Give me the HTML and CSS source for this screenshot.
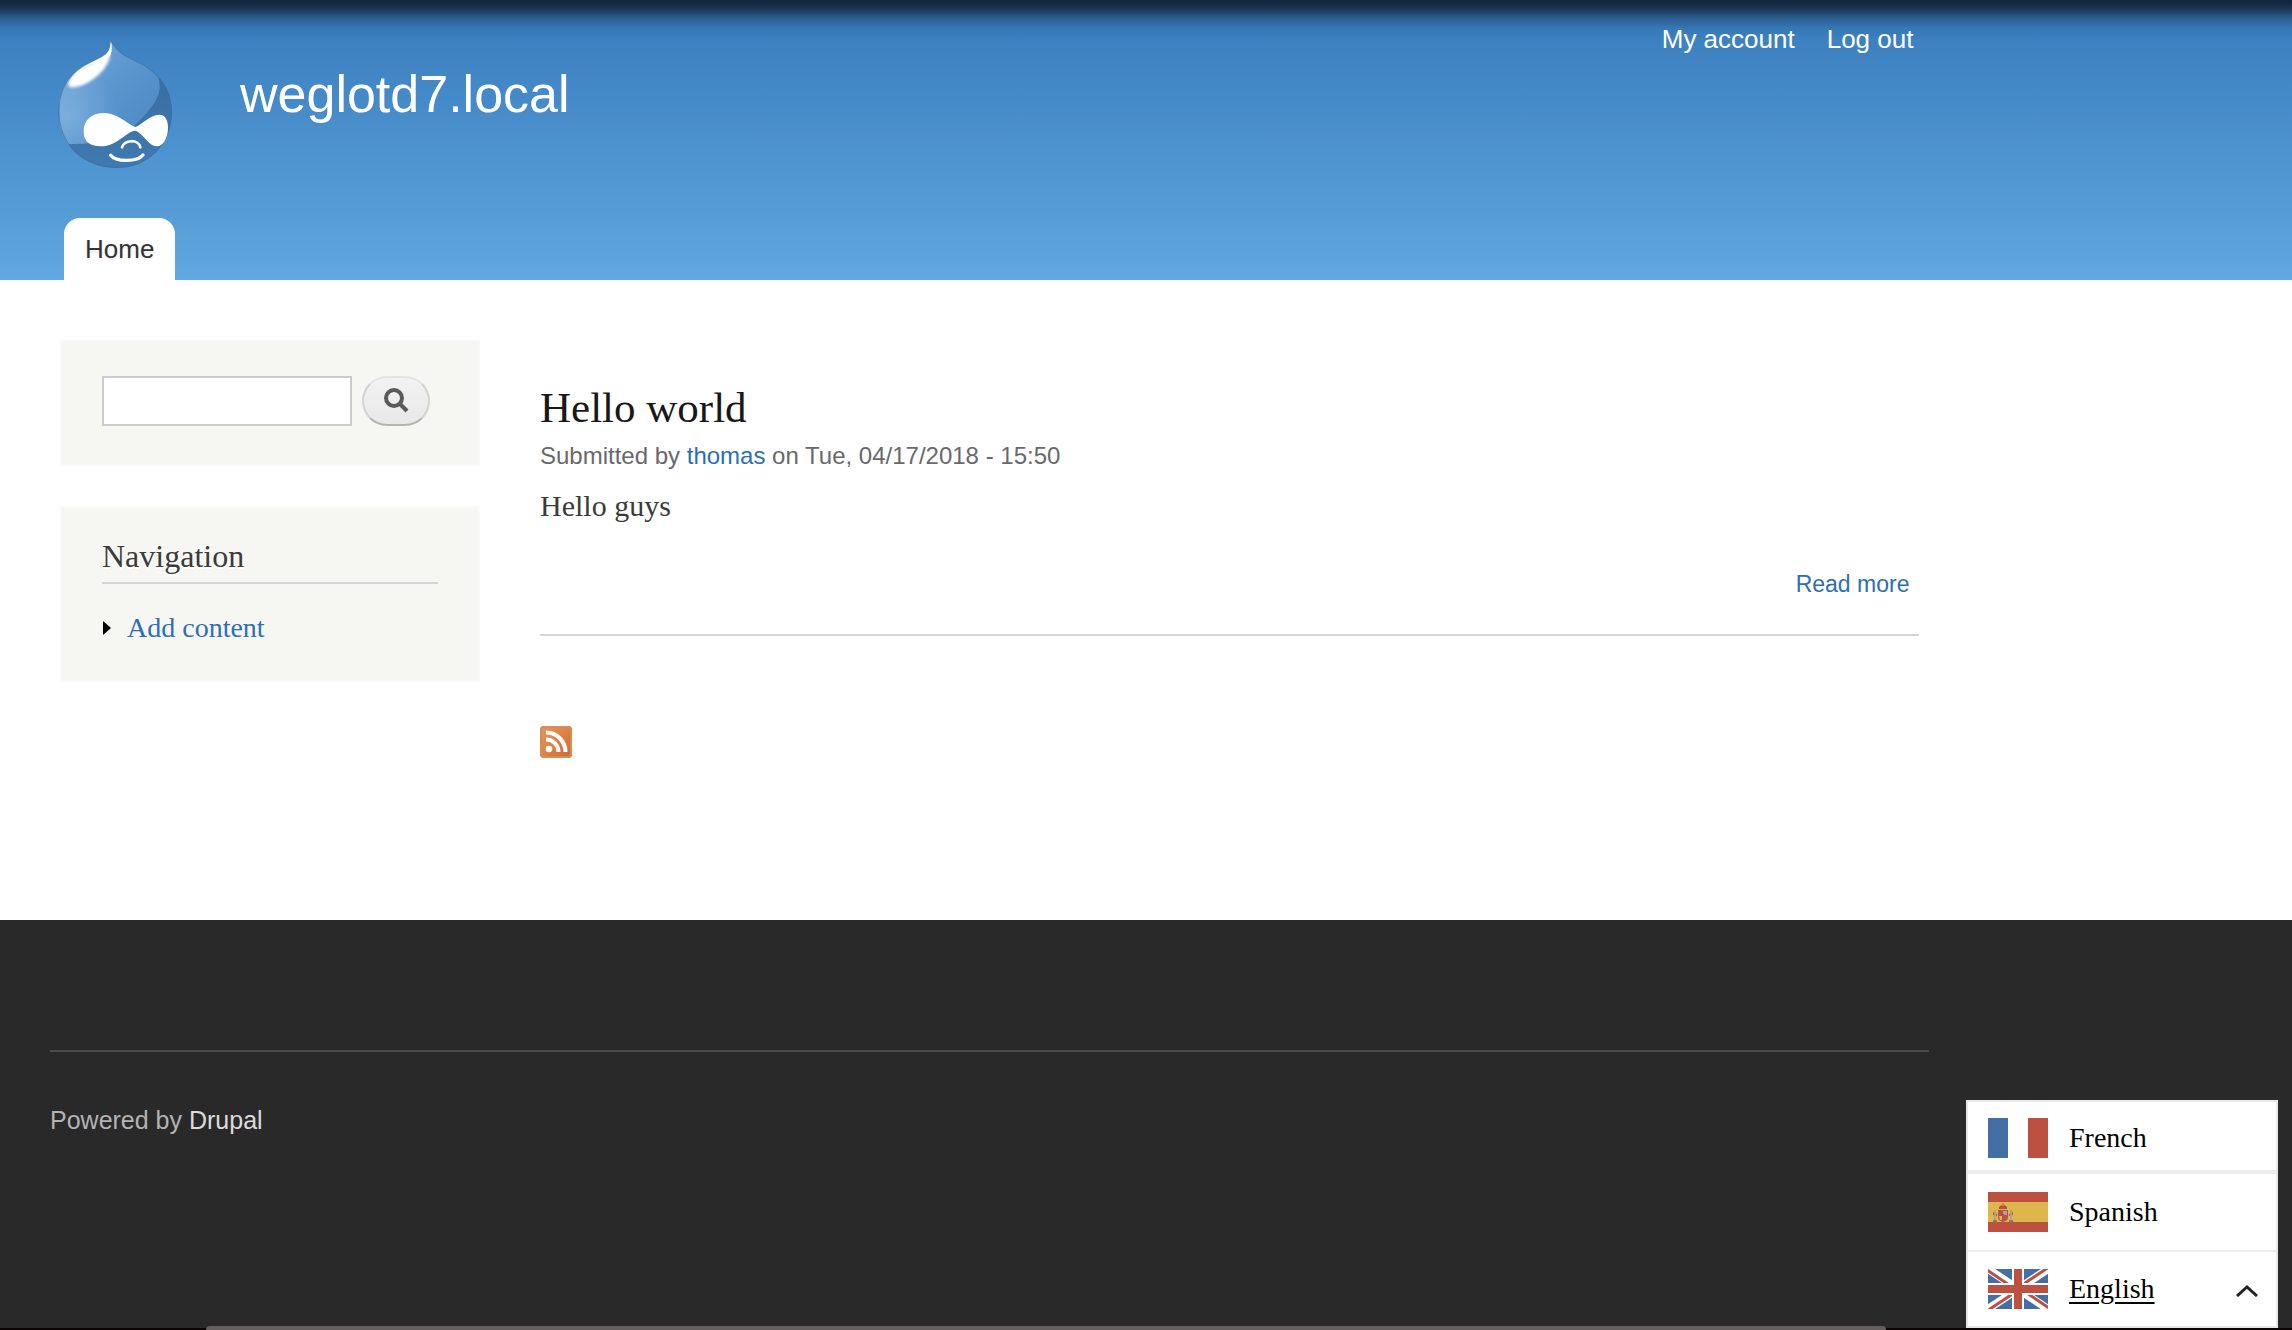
FILE: index.html
```html
<!DOCTYPE html>
<html lang="en">
<head>
<meta charset="utf-8">
<title>weglotd7.local</title>
<meta name="viewport" content="width=device-width, initial-scale=1">
<link rel="stylesheet" href="styles.css">
</head>
<body>
<header class="header">
  <div class="container header-inner">
    <div class="branding">
      <a class="logo" href="#" aria-label="Home">
        <svg viewBox="54 30 342 384" width="114" height="128" aria-hidden="true">
          <defs>
            <linearGradient id="drop" x1="0" y1="0" x2="1" y2="1">
              <stop offset="0" stop-color="#7fadd9"/>
              <stop offset=".5" stop-color="#5b96cf"/>
              <stop offset="1" stop-color="#4a86c1"/>
            </linearGradient>
            <linearGradient id="shade" x1="0" y1="0" x2="0" y2="1">
              <stop offset="0" stop-color="#38699c"/>
              <stop offset="1" stop-color="#3f7ab2"/>
            </linearGradient>
            <radialGradient id="glow" cx=".1" cy=".75" r=".5">
              <stop offset="0" stop-color="#8dbbe5" stop-opacity=".6"/>
              <stop offset="1" stop-color="#8dbbe5" stop-opacity="0"/>
            </radialGradient>
            <filter id="soft"><feGaussianBlur stdDeviation="4"/></filter>
            <clipPath id="body"><path d="M212 30C220 46 232 64 256 78C276 89 305 99 332 120C372 150 396 192 396 245C396 345 322 414 230 414C132 414 55 345 55 245C55 188 78 148 112 120C140 97 178 87 198 70C210 60 211 45 212 30Z"/></clipPath>
          </defs>
          <g clip-path="url(#body)">
            <path fill="url(#shade)" d="M50 30H400V420H50Z"/>
            <path fill="url(#drop)" d="M50 20H300C340 110 360 130 359 175C356 215 318 254 285 285C240 330 180 343 60 343Z"/>
            <path fill="url(#glow)" d="M50 20H300C340 110 360 130 359 175C356 215 318 254 285 285C240 330 180 343 60 343Z"/>
            <path fill="#4b8ac5" opacity=".7" d="M400 310C360 370 320 400 250 416H330L400 380Z"/>
            <path fill="#fff" filter="url(#soft)" d="M210 76C208 105 178 140 140 160C112 174 92 174 86 168C80 160 104 126 128 113C156 97 190 84 203 68Z"/>
            <path fill="#fff" d="M212 32C219 55 215 78 203 84C180 92 140 104 118 126C104 138 92 152 84 166C90 148 105 128 122 117C150 97 186 86 201 70C210 58 211 45 212 32Z"/>
          </g>
          <path fill="none" stroke="#3c6f9f" stroke-width="3" opacity=".65" d="M214 34C220 46 232 64 256 78C276 89 305 99 332 120C372 150 394 192 394 245C394 345 322 412 230 412C132 412 57 345 57 245C57 188 78 148 112 120C140 97 178 87 198 70"/>
          <path fill="#fff" d="M131 304C131 270 155 249 192 249C232 249 260 281 286 291C305 285 329 254 358 254C377 254 384 272 384 293C384 320 371 349 350 349C327 349 305 306 286 302C260 303 233 348 182 349C149 349 131 335 131 304Z"/>
          <path fill="none" stroke="#fff" stroke-width="8" stroke-linecap="round" d="M246 352C252 329 296 326 301 352"/>
          <path fill="none" stroke="#fff" stroke-width="10" stroke-linecap="round" d="M212 376C228 397 292 396 309 375"/>
        </svg>
      </a>
      <h1 class="site-name"><a href="#">weglotd7.local</a></h1>
      <nav class="user-menu" aria-label="User menu">
        <a href="#">My account</a>
        <a href="#">Log out</a>
      </nav>
    </div>
    <nav class="tabs" aria-label="Main menu"><a class="tab" href="#">Home</a></nav>
  </div>
</header>

<div class="container page">
  <aside class="sidebar">
    <form class="block search-block">
      <input class="search-input" type="text" aria-label="Search">
      <button class="search-button" type="button" aria-label="Search">
        <svg width="26" height="26" viewBox="0 0 26 26" aria-hidden="true"><circle cx="11" cy="11" r="8" fill="none" stroke="#5a5a5a" stroke-width="4"/><path d="M16 16L24 24" stroke="#5a5a5a" stroke-width="4"/></svg>
      </button>
    </form>
    <section class="block nav-block">
      <h2 class="block-title">Navigation</h2>
      <ul class="nav-list">
        <li><svg width="10" height="14" viewBox="0 0 10 14" aria-hidden="true"><path d="M1 0L9 7L1 14Z"/></svg><a href="#">Add content</a></li>
      </ul>
    </section>
  </aside>
  <main class="main">
    <article class="post">
      <h2 class="post-title"><a href="#">Hello world</a></h2>
      <p class="post-meta">Submitted by <a href="#">thomas</a> on Tue, 04/17/2018 - 15:50</p>
      <p class="post-body">Hello guys</p>
      <p class="post-links"><a href="#">Read more</a></p>
    </article>
    <a class="feed" href="#" aria-label="Subscribe">
      <svg width="32" height="32" viewBox="0 0 32 32" aria-hidden="true">
        <defs><linearGradient id="rss" x1="0" y1="0" x2="1" y2="1"><stop offset="0" stop-color="#e19a60"/><stop offset=".5" stop-color="#dd8242"/><stop offset="1" stop-color="#c9692f"/></linearGradient></defs>
        <rect width="32" height="32" rx="4" fill="url(#rss)"/>
        <rect x="1" y="1" width="30" height="30" rx="3" fill="none" stroke="#d98a56" stroke-width="2"/>
        <circle cx="9" cy="23" r="3.300" fill="#fff"/>
        <path d="M6 13.500A12.500 12.500 0 0 1 18.500 26M6 6.500A19.500 19.500 0 0 1 25.500 26" fill="none" stroke="#fff" stroke-width="4"/>
      </svg>
    </a>
  </main>
</div>

<footer class="footer">
  <div class="container footer-inner">
    <p class="powered">Powered by <a href="#">Drupal</a></p>
  </div>
</footer>

<nav class="languages" aria-label="Language">
  <a class="language french" href="#">
    <svg width="60" height="40" viewBox="0 0 60 40" aria-hidden="true"><path fill="#446fa6" d="M0 0H20V40H0Z"/><path fill="#fff" d="M20 0H40V40H20Z"/><path fill="#bc5142" d="M40 0H60V40H40Z"/></svg>
    <span>French</span>
  </a>
  <a class="language spanish" href="#">
    <svg width="60" height="40" viewBox="0 0 60 40" aria-hidden="true">
      <path fill="#bc5142" d="M0 0H60V40H0Z"/><path fill="#deb64e" d="M0 10H60V30H0Z"/>
      <g fill="#bc5142"><path d="M11 15Q15 10 19 15V17H11Z"/><path d="M10 18H20V25Q20 29 15 30Q10 29 10 25Z"/><path d="M5 20L9 22V24L5 23ZM25 20L21 22V24L25 23Z"/></g>
      <path fill="#b7a08e" d="M6 18H8V29H6ZM22 18H24V29H22Z"/>
      <path fill="#c09aa8" d="M15 19H19V23H15Z"/><path fill="#e0b54e" d="M11 24H14V28H12Z"/><path fill="#566b9b" d="M14 22H16V24H14Z"/>
      <path fill="#7e8662" d="M5 28H9V30H5ZM21 28H25V30H21Z"/><path fill="#d9803f" d="M14 11H16V14H14Z"/>
    </svg>
    <span>Spanish</span>
  </a>
  <button class="language current" type="button" aria-expanded="true">
    <svg width="60" height="40" viewBox="0 0 60 40" aria-hidden="true">
      <path fill="#446fa6" d="M0 0H60V40H0Z"/>
      <path stroke="#fff" stroke-width="8" d="M0 0L60 40M60 0L0 40"/>
      <path stroke="#bc5142" stroke-width="3" d="M-1 1L27 20M61 -2L31 18M-1 42L29 22M61 39L33 20"/>
      <path fill="#fff" d="M24 0H36V14H60V26H36V40H24V26H0V14H24Z"/>
      <path fill="#bc5142" d="M26 0H34V16H60V24H34V40H26V24H0V16H26Z"/>
    </svg>
    <span>English</span>
    <svg class="chevron" width="22" height="12" viewBox="0 0 22 12" aria-hidden="true"><path d="M1 11L11 2L21 11" fill="none" stroke="#222" stroke-width="3"/></svg>
  </button>
</nav>
<div class="dock" aria-hidden="true"><div class="dock-shelf"></div></div>
</body>
</html>
```
FILE: styles.css
```css
* { box-sizing: border-box; }

body {
  margin: 0;
  min-height: 100vh;
  display: flex;
  flex-direction: column;
  background: #fff;
  color: #3b3b3b;
  font-family: Georgia, "Liberation Serif", serif;
  font-size: 28px;
  line-height: 40px;
}

h1, h2, p, ul { margin: 0; padding: 0; font-weight: 400; }
a { color: #2c6fb2; text-decoration: none; }
svg { display: block; flex: none; }

.container { width: 82%; margin-left: 50px; }

.header {
  background:
    linear-gradient(#12263c 0, #13293f 4px, rgba(19, 41, 63, .78) 10px, rgba(19, 50, 80, .42) 18px, rgba(30, 80, 130, .16) 28px, rgba(58, 126, 191, 0) 40px),
    linear-gradient(#377abc, #60a8df);
}

.header a, .post-meta, .post-links, .powered {
  font-family: "Helvetica Neue", "Liberation Sans", Arial, sans-serif;
}

.branding { display: flex; height: 218px; padding: 0 16px 0 8px; }
.logo { padding-top: 40px; margin-right: 68px; }
.site-name { padding-top: 64px; font-size: 52px; line-height: 60px; }
.site-name a, .user-menu a { color: #fff; }

.user-menu {
  display: flex;
  gap: 32px;
  margin-left: auto;
  padding-top: 23px;
  font-size: 26px;
  line-height: 32px;
}

.tabs { display: flex; padding-left: 14px; }

.tab {
  padding: 15px 21px;
  border-radius: 16px 16px 0 0;
  background: #fff;
  color: #333;
  font-size: 26px;
  line-height: 32px;
  text-shadow: 0 2px 2px #eee;
}

.page {
  display: flex;
  gap: 60px;
  padding: 60px 10px 162px;
}

.sidebar {
  flex: none;
  width: 420px;
  display: flex;
  flex-direction: column;
  gap: 40px;
}

.block { border: 2px solid #f9f9f9; background: #f6f6f2; }
.search-block { display: flex; gap: 10px; padding: 34px 40px 38px; }

.search-input {
  width: 250px;
  height: 50px;
  padding: 4px 8px;
  border: 2px solid #ccc;
  background: #fff;
  font-size: 24px;
}

.search-button {
  width: 68px;
  height: 50px;
  display: flex;
  align-items: center;
  justify-content: center;
  padding: 0 0 2px;
  border: 2px solid #d2d2d2;
  border-top-color: #e4e4e4;
  border-bottom-color: #b4b4b4;
  border-radius: 25px;
  background: linear-gradient(#f3f3f3, #e8e8e8);
}

.nav-block { padding: 28px 40px 32px; }

.block-title {
  margin-bottom: 24px;
  padding-bottom: 6px;
  border-bottom: 2px solid #d6d6d6;
  font-size: 32px;
  text-shadow: 0 2px 0 #fff;
}

.nav-list { list-style: none; }
.nav-list li { display: flex; align-items: center; gap: 15px; }

.main { flex: 1; padding-top: 44px; }
.post { margin-bottom: 90px; padding-bottom: 34px; border-bottom: 2px solid #d3d7d9; }
.post-title { margin-bottom: 8px; font-size: 43px; line-height: 48px; }
.post-title a { color: #181818; }
.post-meta { margin-bottom: 14px; color: #68696b; font-size: 24px; line-height: 32px; }
.post-body { margin-bottom: 42px; font-size: 30px; }
.post-links { padding-right: 10px; font-size: 23px; line-height: 32px; text-align: right; }
.feed { display: block; width: 32px; }

.footer { flex: 1; padding-top: 130px; background: #292929; }
.footer-inner { padding-top: 52px; border-top: 2px solid #4a4a4a; }
.powered { color: #b3b3b3; font-size: 25px; line-height: 32px; }
.powered a { color: #dcdcdc; }

.languages {
  position: fixed;
  right: 14px;
  bottom: 2px;
  width: 312px;
  border: 2px solid #e8e8e8;
  background: #fff;
}

.language {
  display: flex;
  align-items: center;
  gap: 21px;
  width: 100%;
  padding: 0 20px;
  background: #fff;
  color: #000;
}

.french { height: 68px; padding-top: 4px; }
.spanish { height: 80px; border-top: 4px solid #ebedee; }

.current {
  height: 76px;
  padding-right: 18px;
  border: 0;
  border-top: 2px solid #ebebeb;
  font: inherit;
}

.current span { text-decoration: underline; text-underline-offset: 4px; }
.chevron { margin: 4px 0 0 auto; }

.dock {
  position: fixed;
  left: 0;
  right: 0;
  bottom: 0;
  height: 4px;
  background: linear-gradient(transparent 50%, #0c0506 50%);
}

.dock-shelf {
  height: 4px;
  margin: 0 17.7% 0 9%;
  border-radius: 4px 4px 0 0;
  background: #655e5f;
}
```
